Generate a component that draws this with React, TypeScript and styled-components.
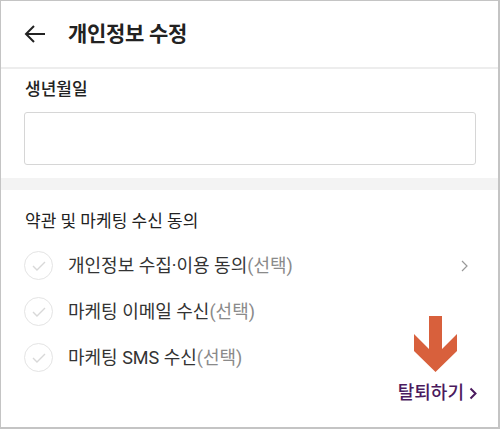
import React from "react";
import styled, { createGlobalStyle } from "styled-components";

const Global = createGlobalStyle`
  html, body { margin: 0; padding: 0; background: #fff; }
  body { font-family: Roboto, "Noto Sans CJK KR", sans-serif; color: #222; }
  * { box-sizing: border-box; }
`;

const Frame = styled.div`
  width: 500px;
  height: 429px;
  border: 1px solid #c4c4c4;
  border-right-width: 2px;
  border-bottom-width: 2px;
  display: flex;
  flex-direction: column;
  overflow: hidden;
  position: relative;
`;

const Header = styled.header`
  height: 68px;
  display: flex;
  align-items: center;
  padding-left: 22px;
  border-bottom: 2px solid #ededed;
  flex-shrink: 0;
`;

const BackButton = styled.button`
  border: 0;
  background: none;
  padding: 0;
  width: 24px;
  height: 24px;
  display: flex;
  align-items: center;
  justify-content: center;
  margin-right: 21px;
  cursor: pointer;
`;

const Title = styled.h1`
  margin: 0;
  font-size: 21px;
  font-weight: 700;
  color: #222;
  letter-spacing: -0.3px;
  line-height: 28px;
`;

const Section = styled.section`
  padding: 0 24px 0 23px;
  display: flex;
  flex-direction: column;
`;

const Label = styled.div`
  font-size: 17px;
  font-weight: 500;
  color: #222;
  line-height: 22px;
  padding-left: 1px;
  margin-top: 9px;
`;

const Input = styled.input`
  margin-top: 12px;
  height: 53px;
  width: 452px;
  border: 1px solid #d6d6d6;
  border-radius: 3px;
  outline: none;
`;

const Band = styled.div`
  height: 12px;
  background: #f3f3f3;
  margin-top: 13px;
  flex-shrink: 0;
`;

const AgreeTitle = styled(Label)`
  margin-top: 20px;
  font-weight: 400;
`;

const List = styled.ul`
  list-style: none;
  margin: 19px 0 0;
  padding: 0;
  display: flex;
  flex-direction: column;
  gap: 17px;
`;

const Row = styled.li`
  display: flex;
  align-items: center;
  height: 29px;
`;

const Check = styled.span`
  width: 29px;
  height: 29px;
  border: 1.5px solid #e4e4e4;
  border-radius: 50%;
  display: flex;
  align-items: center;
  justify-content: center;
  margin-right: 15px;
  flex-shrink: 0;
`;

const RowText = styled.span`
  font-size: 18px;
  color: #333;
  flex: 1;
  line-height: 24px;
`;

const Optional = styled.span`
  color: #8a8a8a;
`;

const Chevron = styled.span`
  width: 12px;
  display: flex;
  justify-content: center;
  margin-right: 4px;
`;

const Footer = styled.div`
  position: absolute;
  right: 21px;
  bottom: 21px;
  display: flex;
  flex-direction: column;
  align-items: center;
`;

const Pointer = styled.svg`
  margin-bottom: 8px;
  margin-right: 2px;
`;

const Leave = styled.a`
  font-size: 18px;
  font-weight: 500;
  color: #4b1a5e;
  text-decoration: none;
  display: flex;
  align-items: center;
  gap: 5px;
  line-height: 26px;
`;

const CheckIcon = () => (
  <svg width="14" height="10" viewBox="0 0 14 10">
    <path d="M1 5l4 4 8-8" fill="none" stroke="#d8d8d8" strokeWidth="1.4" />
  </svg>
);

const items = [
  { main: "개인정보 수집·이용 동의", more: true },
  { main: "마케팅 이메일 수신", more: false },
  { main: "마케팅 SMS 수신", more: false },
];

export default function App() {
  return (
    <>
      <Global />
      <Frame>
        <Header>
          <BackButton aria-label="back">
            <svg width="22" height="18" viewBox="0 0 22 18">
              <path d="M21 9H2M10 1L2 9l8 8" fill="none" stroke="#222" strokeWidth="2" />
            </svg>
          </BackButton>
          <Title>개인정보 수정</Title>
        </Header>
        <Section>
          <Label>생년월일</Label>
          <Input />
        </Section>
        <Band />
        <Section>
          <AgreeTitle>약관 및 마케팅 수신 동의</AgreeTitle>
          <List>
            {items.map((it) => (
              <Row key={it.main}>
                <Check>
                  <CheckIcon />
                </Check>
                <RowText>
                  {it.main}
                  <Optional>(선택)</Optional>
                </RowText>
                {it.more && (
                  <Chevron>
                    <svg width="7" height="12" viewBox="0 0 7 12">
                      <path d="M1 1l5 5-5 5" fill="none" stroke="#999" strokeWidth="1.2" />
                    </svg>
                  </Chevron>
                )}
              </Row>
            ))}
          </List>
        </Section>
        <Footer>
          <Pointer width="44" height="56" viewBox="0 0 44 56">
            <path d="M15 0h13v33l15-15v17L21.5 56 0 35V18l15 15z" fill="#d8603c" />
          </Pointer>
          <Leave href="#">
            탈퇴하기
            <svg width="8" height="13" viewBox="0 0 8 13">
              <path d="M1.5 1.5l5 5-5 5" fill="none" stroke="#4b1a5e" strokeWidth="2" />
            </svg>
          </Leave>
        </Footer>
      </Frame>
    </>
  );
}
